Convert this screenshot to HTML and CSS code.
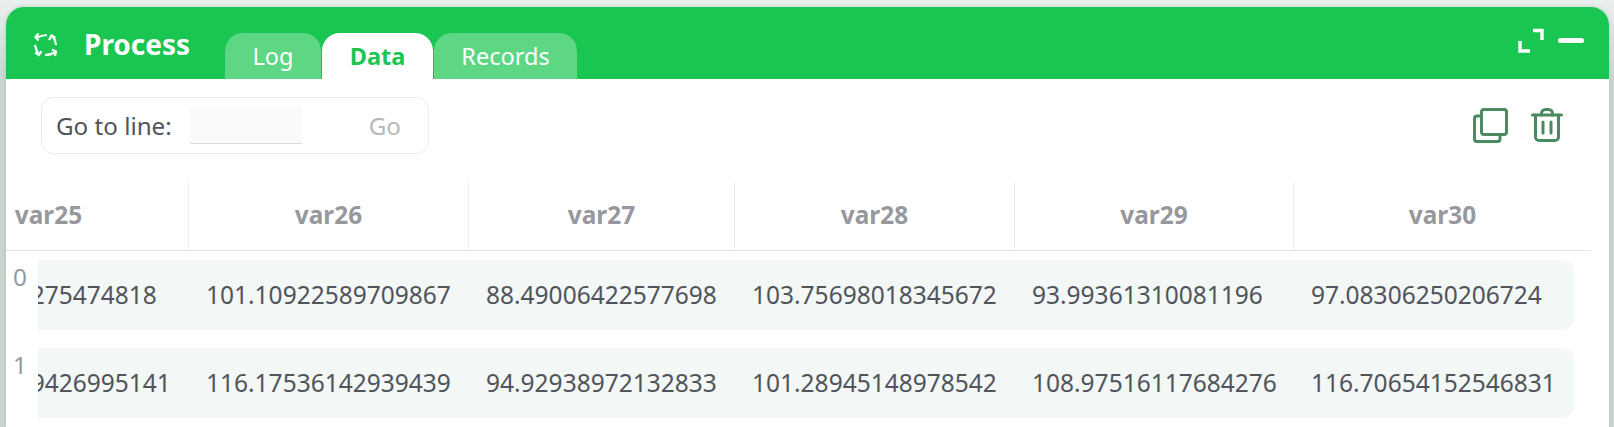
FILE: index.html
```html
<!DOCTYPE html>
<html lang="en">
<head>
    <meta charset="UTF-8">
    <title>Process</title>
    <link rel="stylesheet" href="styles.css">
</head>
<body>
    <div class="window">
        <div class="titlebar">
            <div class="title">
                <svg class="process-icon" viewBox="0 0 34 34" fill="none" stroke="#fff" stroke-width="2.2">
                    <path d="M19 9Q13 9.5 9 11.5"/><path d="M10.5 7.5 7.5 11 10.5 14.5"/>
                    <path d="M7 19Q8 24 10.5 28"/><path d="M7 26.5 11 29 13.5 25"/>
                    <path d="M17 29Q23 29 27 26"/><path d="M24 23.5 28 25.5 27 30"/>
                    <path d="M28 19Q27.5 14 24.5 10"/><path d="M21 14 23.5 9.5 27.5 12"/>
                </svg>
                <span class="title-text">Process</span>
            </div>
            <div class="tabs">
                <div class="tab tab-log">Log</div>
                <div class="tab tab-data active">Data</div>
                <div class="tab tab-records">Records</div>
            </div>
            <div class="window-btns">
                <svg class="expand-icon" viewBox="0 0 26 25" fill="none" stroke="#fff" stroke-width="3.4">
                    <path d="M15 2.5H24V12"/><path d="M2 13V23H12"/>
                </svg>
                <div class="minimize"></div>
            </div>
        </div>

        <div class="toolbar">
            <div class="goto">
                <label class="goto-label">Go to line:</label>
                <div class="goto-input"></div>
                <span class="goto-btn">Go</span>
            </div>
            <div class="actions">
                <svg class="copy-icon" viewBox="0 0 35 35" fill="none" stroke="#4a8a60" stroke-width="3" stroke-linejoin="round">
                    <rect x="8.5" y="1.5" width="25" height="25" rx="2.5"/>
                    <path d="M8.5 8H4A2.5 2.5 0 0 0 1.5 10.5V31A2.5 2.5 0 0 0 4 33.5H24.5A2.5 2.5 0 0 0 27 31V26.5"/>
                </svg>
                <svg class="trash-icon" viewBox="0 0 32 34" fill="none" stroke="#4a8a60" stroke-width="3" stroke-linecap="round" stroke-linejoin="round">
                    <path d="M1.5 7H30.5"/>
                    <path d="M10.5 7V5.5A4 4 0 0 1 14.5 1.5H17.5A4 4 0 0 1 21.5 5.5V7"/>
                    <path d="M4.5 7V29A3.5 3.5 0 0 0 8 32.5H24A3.5 3.5 0 0 0 27.5 29V7"/>
                    <path d="M12 14V25"/><path d="M20 14V25"/>
                </svg>
            </div>
        </div>

        <div class="sheet">
            <div class="thead">
                <div class="th col-25">var25</div>
                <div class="th col-26">var26</div>
                <div class="th col-27">var27</div>
                <div class="th col-28">var28</div>
                <div class="th col-29">var29</div>
                <div class="th col-30">var30</div>
            </div>
            <div class="row">
                <div class="row-index">0</div>
                <div class="row-cells">
                    <div class="td col-25">92.64100275474818</div>
                    <div class="td col-26">101.10922589709867</div>
                    <div class="td col-27">88.49006422577698</div>
                    <div class="td col-28">103.75698018345672</div>
                    <div class="td col-29">93.99361310081196</div>
                    <div class="td col-30">97.08306250206724</div>
                </div>
            </div>
            <div class="row">
                <div class="row-index">1</div>
                <div class="row-cells">
                    <div class="td col-25">104.38159426995141</div>
                    <div class="td col-26">116.17536142939439</div>
                    <div class="td col-27">94.92938972132833</div>
                    <div class="td col-28">101.28945148978542</div>
                    <div class="td col-29">108.97516117684276</div>
                    <div class="td col-30">116.70654152546831</div>
                </div>
            </div>
        </div>
    </div>
</body>
</html>
```

FILE: styles.css
```css
html, body {
    height: 100%;
}
body {
    margin: 0;
    overflow: hidden;
    background: linear-gradient(#eaf0ed 0, #ccd6d1 80px);
    font-family: "Noto Sans", sans-serif;
    color: #50545b;
}
.window {
    height: 420px;
    margin: 7px 5px 0 6px;
    background-color: white;
    border-radius: 18px 18px 0 0;
    box-shadow: 0 0 4px rgba(60,90,70,0.2);
    overflow: hidden;
}
.titlebar {
    display: flex;
    height: 72px;
    background-color: #19c651;
    color: white;
}
.title {
    display: flex;
    align-items: flex-start;
    width: 219px;
    padding: 18px 0 0 22px;
    box-sizing: border-box;
}
.process-icon {
    width: 34px;
    height: 34px;
    margin-top: 1px;
}
.title-text {
    margin-left: 22px;
    font-size: 28px;
    font-weight: 700;
    line-height: 38px;
}
.tabs {
    display: flex;
    align-items: flex-end;
    gap: 1px;
}
.tab {
    height: 46px;
    background-color: #5dd784;
    border-radius: 18px 18px 0 0;
    font-size: 23.5px;
    line-height: 46px;
    text-align: center;
}
.tab-log {
    width: 96px;
}
.tab-data {
    width: 111px;
}
.tab-records {
    width: 143px;
}
.tab.active {
    background-color: white;
    color: #19c651;
    font-weight: 700;
}
.window-btns {
    display: flex;
    gap: 14px;
    margin-left: auto;
    padding: 21px 25px 0 0;
}
.expand-icon {
    width: 26px;
    height: 25px;
}
.minimize {
    width: 26px;
    height: 5px;
    margin-top: 10px;
    background-color: white;
    border-radius: 3px;
}
.toolbar {
    display: flex;
    justify-content: space-between;
    padding: 18px 46px 0 35px;
    height: 103px;
    box-sizing: border-box;
}
.goto {
    display: flex;
    align-items: center;
    width: 388px;
    height: 57px;
    box-sizing: border-box;
    padding-left: 14px;
    border: 1px solid #ebebeb;
    border-radius: 12px;
    font-size: 24.2px;
}
.goto-input {
    width: 112px;
    height: 36px;
    margin-left: 18px;
    background-color: #fafafa;
    border-bottom: 1px solid #dcdcdc;
}
.goto-btn {
    margin-left: 67px;
    color: #b8b8b8;
}
.actions {
    display: flex;
    gap: 23px;
    padding-top: 11px;
}
.copy-icon {
    width: 35px;
    height: 35px;
}
.trash-icon {
    width: 32px;
    height: 34px;
}
.sheet {
    margin-right: 18px;
}
.thead {
    display: flex;
    justify-content: flex-end;
    height: 68px;
    border-bottom: 1px solid #e2e2e2;
    overflow: hidden;
}
.th {
    flex: none;
    box-sizing: border-box;
    border-right: 1px solid #ebebeb;
    font-size: 24.4px;
    font-weight: 700;
    line-height: 66px;
    text-align: center;
    color: #97989d;
}
.thead .col-30 {
    width: 297px;
    border-right: none;
}
.col-25 {
    width: 280px;
}
.col-26 {
    width: 280px;
}
.col-27 {
    width: 266px;
}
.col-28 {
    width: 280px;
}
.col-29 {
    width: 279px;
}
.col-30 {
    width: 281px;
}
.row {
    display: flex;
    height: 70px;
    margin: 9px 17px 18px 0;
}
.row-index {
    flex: none;
    width: 32px;
    padding: 0 0 0 7px;
    box-sizing: border-box;
    font-size: 24.4px;
    color: #93999f;
}
.row-cells {
    display: flex;
    flex: 1;
    justify-content: flex-end;
    overflow: hidden;
    background-color: #f3f7f5;
    border-radius: 0 12px 12px 0;
}
.td {
    flex: none;
    box-sizing: border-box;
    padding-left: 18px;
    font-size: 24.5px;
    line-height: 70px;
}
```
